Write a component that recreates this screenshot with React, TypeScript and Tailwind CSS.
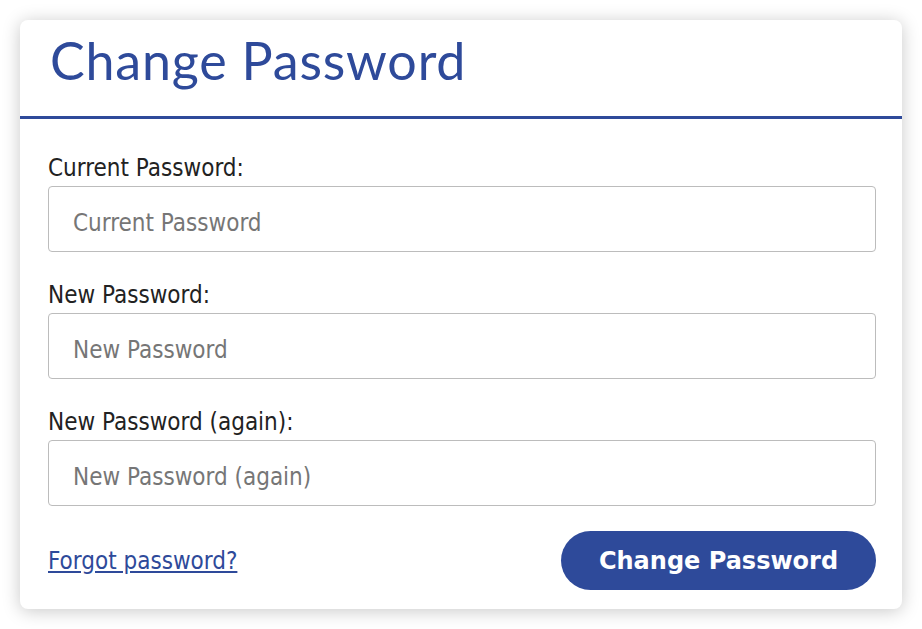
import { useState } from "react";

function Field({
  label,
  placeholder,
  value,
  onChange,
}: {
  label: string;
  placeholder: string;
  value: string;
  onChange: (v: string) => void;
}) {
  return (
    <div className="flex flex-col mb-[29px]">
      <label className="text-[24px] leading-[28px] text-[#222] mb-[4px]">{label}</label>
      <input
        type="password"
        value={value}
        onChange={(e) => onChange(e.target.value)}
        placeholder={placeholder}
        className="h-[66px] w-full rounded-[4px] border border-[#bcbcbc] px-[24px] pt-[7px] text-[24px] text-[#222] placeholder:text-[#767676] outline-none"
      />
    </div>
  );
}

export default function App() {
  const [current, setCurrent] = useState("");
  const [next, setNext] = useState("");
  const [again, setAgain] = useState("");

  return (
    <div className="min-h-screen bg-white p-[20px] font-['DejaVu_Sans_Condensed','DejaVu_Sans',sans-serif]">
      <div className="w-[882px] rounded-[8px] bg-white shadow-[0_2px_18px_rgba(0,0,0,0.22)]">
        <div className="h-[99px] border-b-[3px] border-[#2e4a9a] px-[30px] pt-[10px]">
          <h1 className="font-['Lato',sans-serif] text-[52px] leading-[60px] tracking-[0.8px] text-[#2e4a9a]">
            Change Password
          </h1>
        </div>

        <form
          onSubmit={(e) => e.preventDefault()}
          className="pl-[28px] pr-[26px] pt-[35px] pb-[19px]"
        >
          <Field label="Current Password:" placeholder="Current Password" value={current} onChange={setCurrent} />
          <Field label="New Password:" placeholder="New Password" value={next} onChange={setNext} />
          <Field label="New Password (again):" placeholder="New Password (again)" value={again} onChange={setAgain} />

          <div className="-mt-[4px] flex items-center justify-between">
            <a href="#" className="text-[24px] text-[#2e4a9a] underline">
              Forgot password?
            </a>
            <button
              type="submit"
              className="h-[59px] w-[315px] rounded-full bg-[#2e4a9a] font-['DejaVu_Sans',sans-serif] text-[24px] font-bold text-white"
            >
              Change Password
            </button>
          </div>
        </form>
      </div>
    </div>
  );
}
